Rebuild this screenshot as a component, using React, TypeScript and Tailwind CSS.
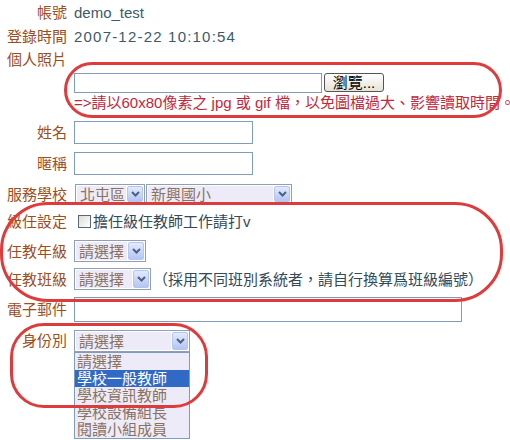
const font = "font-['Liberation_Sans','Noto_Sans_CJK_TC',sans-serif]";

function Arrow() {
  return (
    <div className="ml-px flex w-[16px] shrink-0 items-center justify-center rounded-[2px] border border-[#b4c6ef] bg-linear-to-b from-[#e2eafd] to-[#b4c5f1]">
      <svg width="9" height="6" viewBox="0 0 9 6">
        <path d="M1 1l3.5 3.5L8 1" stroke="#4d6185" strokeWidth="2" fill="none" />
      </svg>
    </div>
  );
}

function FakeSelect({ text, className }: { text: string; className: string }) {
  return (
    <div className={`flex shrink-0 border border-[#8f9fb4] bg-white p-px ${className}`}>
      <div className="flex flex-1 items-center overflow-hidden bg-[#ecebf7] pl-[3px] text-[#8a7262]">
        {text}
      </div>
      <Arrow />
    </div>
  );
}

function Row({
  label,
  className,
  children,
}: {
  label: string;
  className: string;
  children?: React.ReactNode;
}) {
  return (
    <div className={`flex items-center ${className}`}>
      <div className="w-[67px] shrink-0 text-right text-[#9c4e1c]">{label}</div>
      <div className="ml-[7px] flex h-full items-center">{children}</div>
    </div>
  );
}

const roles = ['請選擇', '學校一般教師', '學校資訊教師', '學校設備組長', '閱讀小組成員'];

export default function App() {
  return (
    <div className={`relative h-[440px] w-[510px] overflow-hidden bg-white text-[15px] leading-none ${font}`}>
      <div className="flex flex-col whitespace-nowrap">
        <Row label="帳號" className="h-[25px]">
          <span className="text-[#3d5a68]">demo_test</span>
        </Row>
        <Row label="登錄時間" className="h-[22px]">
          <span className="tracking-[1.2px] text-[#3d5a68]">2007-12-22 10:10:54</span>
        </Row>
        <Row label="個人照片" className="h-[25px]" />

        <div className="mt-px flex h-[20px] pl-[74px]">
          <div className="h-[20px] w-[248px] border border-[#7f9db9] bg-white" />
          <button className="ml-[2px] flex h-[19px] w-[60px] items-center justify-center rounded-[3px] border border-[#555] bg-linear-to-b from-white to-[#e6e3d6] text-[15px] text-black">
            瀏覽...
          </button>
        </div>
        <div className="flex h-[19px] items-center pl-[74px] text-[#c0283c]">
          =&gt;請以60x80像素之 jpg 或 gif 檔，以免圖檔過大、影響讀取時間。
        </div>

        <Row label="姓名" className="mt-[9px] h-[23px]">
          <div className="h-[23px] w-[179px] border border-[#7f9db9] bg-white" />
        </Row>
        <Row label="暱稱" className="mt-[8px] h-[23px]">
          <div className="h-[23px] w-[179px] border border-[#7f9db9] bg-white" />
        </Row>
        <Row label="服務學校" className="mt-[9px] h-[20px]">
          <FakeSelect text="北屯區" className="ml-px h-[20px] w-[70px]" />
          <FakeSelect text="新興國小" className="ml-[1px] h-[20px] w-[146px]" />
        </Row>
        <Row label="級任設定" className="mt-[7px] h-[20px]">
          <div className="ml-[4px] h-[13px] w-[13px] border border-[#5c6670] bg-linear-to-br from-[#dcdcd8] to-white" />
          <span className="ml-[2px] text-[#334a58]">擔任級任教師工作請打v</span>
        </Row>
        <Row label="任教年級" className="mt-[9px] h-[22px]">
          <FakeSelect text="請選擇" className="h-[22px] w-[72px]" />
        </Row>
        <Row label="任教班級" className="mt-[6px] h-[22px]">
          <FakeSelect text="請選擇" className="h-[22px] w-[77px]" />
          <span className="ml-[2px] text-[#334a58]">（採用不同班別系統者，請自行換算爲班級編號）</span>
        </Row>
        <Row label="電子郵件" className="mt-[7px] h-[25px]">
          <div className="h-[25px] w-[388px] border border-[#7f9db9] bg-white" />
        </Row>

        <div className="mt-[8px] flex items-start">
          <div className="flex h-[20px] w-[67px] shrink-0 items-center justify-end text-[#9c4e1c]">身份別</div>
          <div className="ml-[7px] flex flex-col">
            <FakeSelect text="請選擇" className="h-[22px] w-[116px]" />
            <div className="w-[116px] border border-[#7f9db9] bg-[#ecebf7]">
              {roles.map((r, i) => (
                <div
                  key={r}
                  className={`flex h-[17px] items-center pl-[2px] text-[15px] ${
                    i === 1 ? 'bg-[#316ac5] text-white' : 'text-[#8a7262]'
                  }`}
                >
                  {r}
                </div>
              ))}
            </div>
          </div>
        </div>
      </div>

      {/* red annotation marks */}
      <div className="pointer-events-none absolute left-[64px] top-[62px] h-[56px] w-[438px] rounded-[28px] border-[3px] border-[#de3c3c]" />
      <div className="pointer-events-none absolute left-0 top-[202px] h-[100px] w-[503px] rounded-[48px] border-[3px] border-[#de3c3c]" />
      <div className="pointer-events-none absolute left-[10px] top-[323px] h-[85px] w-[198px] rounded-[34px] border-[3px] border-[#de3c3c]" />
    </div>
  );
}
